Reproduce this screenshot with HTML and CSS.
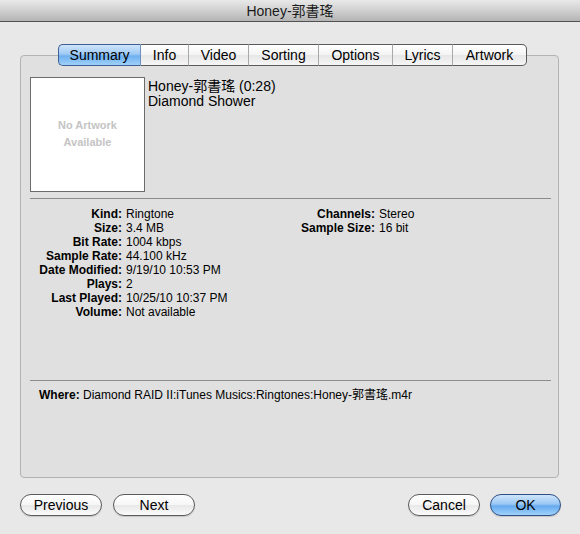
FILE: index.html
```html
<!DOCTYPE html>
<html>
<head>
<meta charset="utf-8">
<link rel="stylesheet" href="styles.css">
</head>
<body>
<div class="window">
  <div class="titlebar">Honey-郭書瑤</div>
  <div class="content">
    <div class="tabs">
      <div class="tab tab-summary selected">Summary</div>
      <div class="tab tab-info">Info</div>
      <div class="tab tab-video">Video</div>
      <div class="tab tab-sorting">Sorting</div>
      <div class="tab tab-options">Options</div>
      <div class="tab tab-lyrics">Lyrics</div>
      <div class="tab tab-artwork">Artwork</div>
    </div>
    <div class="box">
      <div class="top">
        <div class="artwork"><span>No Artwork</span><span>Available</span></div>
        <div class="headline">
          <div>Honey-郭書瑤 (0:28)</div>
          <div>Diamond Shower</div>
        </div>
      </div>
      <div class="sep"></div>
      <div class="fields">
        <div class="col col-left">
          <div class="lbl">Kind:</div><div class="val">Ringtone</div>
          <div class="lbl">Size:</div><div class="val">3.4 MB</div>
          <div class="lbl">Bit Rate:</div><div class="val">1004 kbps</div>
          <div class="lbl">Sample Rate:</div><div class="val">44.100 kHz</div>
          <div class="lbl">Date Modified:</div><div class="val">9/19/10 10:53 PM</div>
          <div class="lbl">Plays:</div><div class="val">2</div>
          <div class="lbl">Last Played:</div><div class="val">10/25/10 10:37 PM</div>
          <div class="lbl">Volume:</div><div class="val">Not available</div>
        </div>
        <div class="col col-right">
          <div class="lbl">Channels:</div><div class="val">Stereo</div>
          <div class="lbl">Sample Size:</div><div class="val">16 bit</div>
        </div>
      </div>
      <div class="sep"></div>
      <div class="where"><b>Where:</b> Diamond RAID II:iTunes Musics:Ringtones:Honey-郭書瑤.m4r</div>
    </div>
    <div class="buttons">
      <div class="btn btn-prev">Previous</div>
      <div class="btn btn-next">Next</div>
      <div class="spacer"></div>
      <div class="btn btn-cancel">Cancel</div>
      <div class="btn btn-ok">OK</div>
    </div>
  </div>
</div>
</body>
</html>
```
FILE: styles.css
```css
html, body {
  margin: 0;
  padding: 0;
}
body {
  width: 580px;
  height: 534px;
  background: #e8e8e8;
  font-family: "Liberation Sans", "Noto Sans CJK TC", sans-serif;
  color: #000;
  overflow: hidden;
}
.window {
  width: 580px;
  height: 534px;
}
.titlebar {
  height: 21px;
  border-bottom: 1px solid #515151;
  background: linear-gradient(#e9e9e9, #d2d2d2 45%, #b4b4b4 100%);
  text-align: center;
  font-size: 14px;
  line-height: 22px;
  color: #1a1a1a;
}
.content {
  padding: 22px 19px 0 20px;
}
.tabs {
  display: flex;
  justify-content: center;
  padding-left: 4px;
  margin-bottom: -11px;
  position: relative;
  z-index: 1;
}
.tab {
  height: 20px;
  line-height: 20px;
  font-size: 14px;
  text-align: center;
  border-top: 1px solid #5a5a5a;
  border-bottom: 1px solid #5a5a5a;
  border-right: 1px solid #a9a9a9;
  background: linear-gradient(#ffffff, #f4f4f4 50%, #e6e6e6 51%, #f6f6f6);
  box-sizing: content-box;
}
.tab:first-child {
  border-left: 1px solid #3e5f95;
  border-radius: 5px 0 0 5px;
}
.tab:last-child {
  border-right: 1px solid #5a5a5a;
  border-radius: 0 5px 5px 0;
}
.tab-summary { width: 81px; }
.tab-info { width: 47px; }
.tab-video { width: 59px; }
.tab-sorting { width: 69px; }
.tab-options { width: 73px; }
.tab-lyrics { width: 59px; }
.tab-artwork { width: 73px; }
.tab.selected {
  background: linear-gradient(#cfe5fb, #9fcaf5 45%, #6fb0f0 55%, #9fd0fa);
  border-top-color: #3e5f95;
  border-bottom-color: #3e5f95;
  border-right-color: #6f8fbf;
}
.box {
  border: 1px solid #b3b3b3;
  border-radius: 4px;
  background: #e0e0e0;
  padding: 21px 7px 0 9px;
  box-sizing: content-box;
  width: 521px;
  height: 400px;
}
.top {
  display: flex;
  height: 115px;
}
.artwork {
  width: 113px;
  border: 1px solid #6c6c6c;
  background: #fff;
  display: flex;
  flex-direction: column;
  align-items: center;
  justify-content: center;
  font-size: 11px;
  font-weight: bold;
  color: #c4c4c4;
  line-height: 17px;
  padding-bottom: 2px;
  box-sizing: content-box;
  height: 111px;
}
.headline {
  margin-left: 3px;
  padding-top: 2px;
  font-size: 14px;
  line-height: 15px;
}
.sep {
  height: 1px;
  background: #8c8c8c;
  margin-top: 6px;
}
.fields {
  display: flex;
  height: 181px;
  padding-top: 8px;
  box-sizing: border-box;
}
.col {
  display: grid;
  align-content: start;
  column-gap: 4px;
  font-size: 12px;
  line-height: 14px;
}
.col-left {
  width: 260px;
  grid-template-columns: 92px auto;
}
.col-right {
  grid-template-columns: 85px auto;
}
.lbl {
  font-weight: bold;
  text-align: right;
  white-space: nowrap;
}
.val {
  white-space: nowrap;
}
.fields + .sep {
  margin-top: 0;
}
.where {
  padding: 7px 0 0 9px;
  font-size: 12px;
  line-height: 14px;
}
.buttons {
  display: flex;
  margin-top: 16px;
}
.spacer {
  flex: 1;
}
.btn {
  height: 20px;
  line-height: 20px;
  border: 1px solid #5b5b5b;
  border-radius: 11px;
  text-align: center;
  font-size: 14px;
  background: linear-gradient(#ffffff, #f6f6f6 50%, #e8e8e8 51%, #fbfbfb);
  box-shadow: 0 1px 1px rgba(0,0,0,0.15);
}
.btn-prev { width: 80px; }
.btn-next { width: 80px; margin-left: 11px; }
.btn-cancel { width: 70px; }
.btn-ok {
  width: 69px;
  margin-left: 10px;
  border-color: #2f4f86;
  background: linear-gradient(#cfe5fb, #9ac8f5 45%, #66aaee 55%, #a0d2fb);
}
```
